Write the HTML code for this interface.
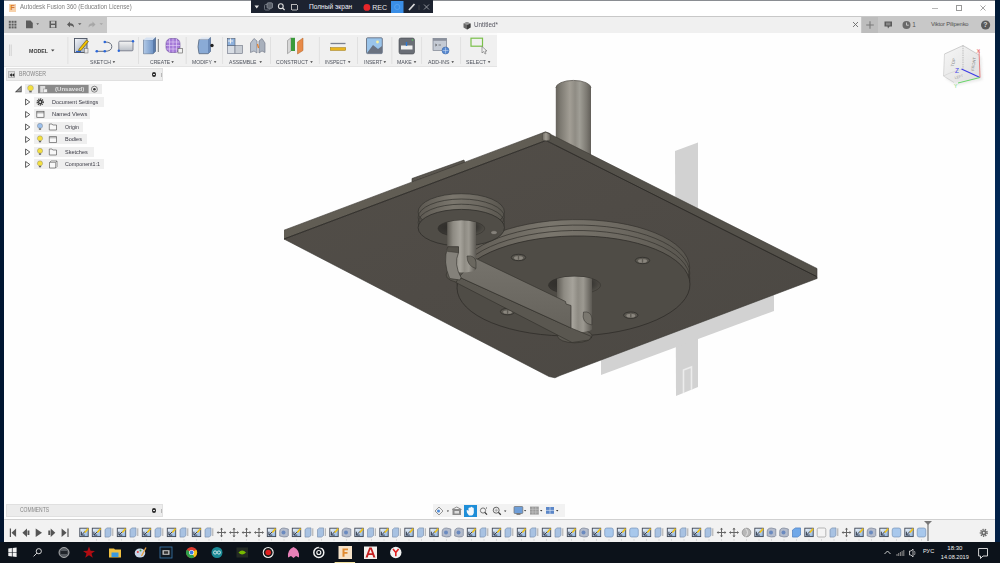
<!DOCTYPE html>
<html><head><meta charset="utf-8">
<style>
*{margin:0;padding:0;box-sizing:border-box}
html,body{width:1000px;height:563px;overflow:hidden;background:#fefefe;font-family:"Liberation Sans",sans-serif}
.a{position:absolute}
.t{position:absolute;white-space:nowrap;line-height:1}
</style></head><body>
<div class="a" style="left:0;top:0;width:1000px;height:563px;background:#fefefe"></div>
<svg class="a" style="left:0;top:0" width="1000" height="563" viewBox="0 0 1000 563">
<defs>
<linearGradient id="cyl" x1="0" x2="1" y1="0" y2="0">
<stop offset="0" stop-color="#66635c"/><stop offset="0.12" stop-color="#7b7870"/><stop offset="0.4" stop-color="#a29e95"/><stop offset="0.55" stop-color="#8f8c84"/><stop offset="0.68" stop-color="#a09e96"/><stop offset="0.88" stop-color="#7c7972"/><stop offset="1" stop-color="#615e58"/>
</linearGradient>
<linearGradient id="shaft" x1="0" x2="1" y1="0" y2="0">
<stop offset="0" stop-color="#5f5c55"/><stop offset="0.2" stop-color="#8d8a82"/><stop offset="0.45" stop-color="#a6a39b"/><stop offset="0.6" stop-color="#8e8b83"/><stop offset="0.75" stop-color="#9c9991"/><stop offset="1" stop-color="#5c5953"/>
</linearGradient>
<linearGradient id="bot" x1="0" x2="1" y1="0" y2="1">
<stop offset="0" stop-color="#524e48"/><stop offset="0.45" stop-color="#4f4b46"/><stop offset="1" stop-color="#4b4843"/>
</linearGradient>
<linearGradient id="band" x1="0" x2="1" y1="0" y2="0">
<stop offset="0" stop-color="#5c5851"/><stop offset="0.4" stop-color="#7a766d"/><stop offset="0.7" stop-color="#6d6961"/><stop offset="1" stop-color="#58554e"/>
</linearGradient>
<linearGradient id="armg" x1="0" x2="0" y1="0" y2="1">
<stop offset="0" stop-color="#76736c"/><stop offset="1" stop-color="#66635c"/>
</linearGradient>
<radialGradient id="holeg" cx="0.35" cy="0.4" r="0.7">
<stop offset="0" stop-color="#2c2a27"/><stop offset="0.7" stop-color="#3a3834"/><stop offset="1" stop-color="#55524b"/>
</radialGradient>
<filter id="blur"><feGaussianBlur stdDeviation="0.7"/></filter>
</defs>
<!-- shadow -->
<g fill="#d2d2d2" filter="url(#blur)">
<polygon points="675,151 698,142.5 698,387 676,396"/>
<polygon points="601,350 774,286 774,311 601,375"/>
</g>
<path d="M683.5,393 L683.5,370 L691.5,367 L691.5,390" fill="none" stroke="#ececec" stroke-width="1.6" filter="url(#blur)"/>
<!-- top cylinder -->
<path d="M555.8,88 A17.6,7.6 0 0 1 591,88 L591,160 L555.8,160 Z" fill="url(#cyl)"/>
<path d="M555.8,88 A17.6,7.6 0 0 1 591,88" fill="none" stroke="#5a5751" stroke-width="0.8"/>
<!-- tab -->
<polygon points="412,178.5 464,160 465,163.5 412,182" fill="#5a564f" stroke="#34322e" stroke-width="0.6"/>
<!-- plate side faces -->
<polygon points="284,230.2 545.5,131.8 546,140.5 284,239" fill="#615d54"/>
<polygon points="545.5,131.8 817,268.5 817,278.5 546,140.5" fill="#54514a"/>
<!-- plate bottom face -->
<polygon points="284,239 546,140.5 816.5,276.5 817,278.5 560,375.5 555,377.8 549,376.5" fill="url(#bot)" stroke="#36342f" stroke-width="0.6"/>
<polyline points="284,239 546,140.5 816.5,276.5" fill="none" stroke="#2f2d29" stroke-width="0.9"/>
<defs><linearGradient id="notch" x1="0" x2="1" y1="0" y2="0"><stop offset="0" stop-color="#6e6a62"/><stop offset="0.45" stop-color="#a09c93"/><stop offset="1" stop-color="#6a665e"/></linearGradient></defs><path d="M542.4,133.5 Q546.3,131.2 550.2,133.5 L550.2,140 Q546.3,141.5 542.4,140 Z" fill="url(#notch)" stroke="#3a3833" stroke-width="0.4"/>
<polyline points="284,230.2 545.5,131.8 817,268.5 817,278.5" fill="none" stroke="#3a3833" stroke-width="0.6"/>

<!-- big disc -->
<g transform="rotate(-1 573.5 286)">
<ellipse cx="573.5" cy="269.6" rx="116.5" ry="50" fill="url(#band)" stroke="#34322e" stroke-width="0.7"/>
<ellipse cx="573.5" cy="275.1" rx="116.5" ry="50" fill="none" stroke="#393732" stroke-width="0.8"/>
<ellipse cx="573.5" cy="280.5" rx="116.5" ry="50" fill="none" stroke="#393732" stroke-width="0.8"/>
<ellipse cx="573.5" cy="286" rx="116.5" ry="50" fill="#4f4c46" stroke="#2f2d29" stroke-width="0.8"/>
</g>
<!-- disc holes -->
<g fill="#5a5750" stroke="#2a2825" stroke-width="0.7">
<ellipse cx="518.5" cy="257.5" rx="7.2" ry="3.2"/>
<ellipse cx="642.5" cy="260.5" rx="7.2" ry="3.2"/>
<ellipse cx="507.6" cy="311.6" rx="7.2" ry="3.2"/>
<ellipse cx="630.8" cy="315.2" rx="7.2" ry="3.2"/>
</g>
<g fill="#8a867e">
<ellipse cx="518.5" cy="258" rx="4.5" ry="1.9"/>
<ellipse cx="642.5" cy="261" rx="4.5" ry="1.9"/>
<ellipse cx="507.6" cy="312.1" rx="4.5" ry="1.9"/>
<ellipse cx="630.8" cy="315.7" rx="4.5" ry="1.9"/>
</g>
<g fill="#5e5b54">
<rect x="517.8" y="256" width="1.4" height="3.8"/><rect x="641.8" y="259" width="1.4" height="3.8"/><rect x="506.9" y="310.1" width="1.4" height="3.8"/><rect x="630.1" y="313.7" width="1.4" height="3.8"/>
</g>
<!-- small pulley -->
<ellipse cx="461.3" cy="212" rx="43.2" ry="18.3" fill="url(#band)" stroke="#34322e" stroke-width="0.7"/>
<ellipse cx="461.3" cy="217.3" rx="43.2" ry="18.3" fill="none" stroke="#393732" stroke-width="0.8"/>
<ellipse cx="461.3" cy="222.5" rx="43.2" ry="18.3" fill="none" stroke="#393732" stroke-width="0.8"/>
<ellipse cx="461.3" cy="227.7" rx="43.2" ry="18.3" fill="#504d47" stroke="#2f2d29" stroke-width="0.8"/>
<ellipse cx="461.3" cy="228.5" rx="23.3" ry="8.2" fill="url(#holeg)" stroke="#2f2d29" stroke-width="0.5"/>
<ellipse cx="494" cy="232.6" rx="3.2" ry="2" fill="#85817a" stroke="#2f2d29" stroke-width="0.4"/>

<!-- center hole -->
<ellipse cx="574.5" cy="285.2" rx="26" ry="9" fill="url(#holeg)" stroke="#2f2d29" stroke-width="0.5"/>
<!-- shaft 1 -->
<ellipse cx="461.6" cy="275" rx="15.5" ry="7.5" fill="#5a5750" stroke="#2f2d29" stroke-width="0.6"/>
<!-- shaft2 end cap -->
<ellipse cx="574.8" cy="336" rx="17.3" ry="6.8" fill="#5c5952" stroke="#2f2d29" stroke-width="0.6"/>
<path d="M558,334 L592,337.5" stroke="#2f2d29" stroke-width="0.5"/>
<!-- shaft 2 -->
<path d="M557,278.8 A26,9 0 0 1 592,278.8 L592,329 A17.5,3.5 0 0 1 557,329 Z" fill="url(#shaft)"/>
<path d="M583.5,312 Q591,311 591.8,318 L591.8,325 Q581,323 583.5,312 Z" fill="#7a776f" stroke="#2f2d29" stroke-width="0.5"/>
<!-- arm narrow band -->
<polygon points="459,277 571,328 591.5,336.5 589,340 572,342.5 456,282.5" fill="#5a5750" stroke="#2f2d29" stroke-width="0.6"/>
<!-- arm broad face -->
<polygon points="476,258.6 565.5,301.5 566,304 571,305.5 571,328 459,277" fill="url(#armg)" stroke="#2f2d29" stroke-width="0.6"/>
<!-- shaft 1 body -->
<path d="M447.2,222.2 A23.3,8.2 0 0 1 476,222.2 L476,269 A14.4,3.5 0 0 1 447.2,269 Z" fill="url(#shaft)"/>
<path d="M467,256 Q475,255 476,262 L476,268.5 Q467,266 467,256 Z" fill="#6a675f" stroke="#2f2d29" stroke-width="0.5"/>
<!-- hook on shaft1 -->
<path d="M447.7,246.8 L458.5,246.8 L458.5,252.7 Q453.5,264 461,277.5 L460,280 L449.7,278.5 Q442.5,262 447.7,246.8 Z" fill="#84817a" stroke="#2f2d29" stroke-width="0.6"/>
<path d="M447.7,246.8 L458.5,246.8 L458.5,252.7 L447.5,251.5 Z" fill="#55524b" stroke="#2f2d29" stroke-width="0.4"/>

</svg>
<!-- title bar -->
<div class="a" style="left:0;top:0;width:1000px;height:16px;background:#ffffff"></div>
<div class="a" style="left:0;top:0;width:1000px;height:1px;background:#8a8d92"></div>
<div class="a" style="left:9px;top:4px;width:6.5px;height:7.5px;background:#f7d2ac"></div>
<div class="t" style="left:10.3px;top:4.4px;font-size:7.5px;font-weight:bold;color:#d97a2a">F</div>
<div class="t" style="left:19.5px;top:4.2px;font-size:6.6px;color:#7c7c7c;transform:scaleX(0.915);transform-origin:0 0">Autodesk Fusion 360 (Education License)</div>
<!-- window controls -->
<div class="a" style="left:932px;top:8px;width:6px;height:1px;background:#b8b8b8"></div>
<div class="a" style="left:956px;top:5px;width:6px;height:6px;border:1px solid #9a9a9a"></div>
<svg class="a" style="left:980px;top:5px" width="6" height="6"><path d="M0.5,0.5 L5.5,5.5 M5.5,0.5 L0.5,5.5" stroke="#9a9a9a" stroke-width="0.9"/></svg>

<!-- record toolbar -->
<div class="a" style="left:250.5px;top:0;width:182px;height:13px;background:#1d2330"></div>
<svg class="a" style="left:250px;top:0" width="182" height="13">
<path d="M4.5,5.5 L9,5.5 L6.75,8.5 Z" fill="#e8e8e8"/>
<rect x="14.5" y="4.5" width="5.5" height="5.5" rx="1.2" fill="none" stroke="#6a707a" stroke-width="1"/><rect x="17" y="2.8" width="5.5" height="5.5" rx="1.2" fill="#5a606a" stroke="#8a909a" stroke-width="0.8"/>
<circle cx="30.8" cy="6.2" r="2.4" fill="none" stroke="#e0e0e0" stroke-width="1.1"/><path d="M32.5,8 L34.6,10" stroke="#e0e0e0" stroke-width="1.2"/>
<path d="M41.5,4 L41.5,10 M42,4.5 L47,4.5 M47.5,5 L47.5,10 M42,10 L47,10" stroke="#c8c8c8" stroke-width="0.9"/>
<circle cx="116.9" cy="7.4" r="3.4" fill="#e8262a"/>
<rect x="141" y="1" width="12.5" height="12" fill="#3a8ee6"/>
<circle cx="147.2" cy="7" r="2.6" fill="none" stroke="#5aa6f0" stroke-width="0.8"/>
<path d="M159,10 L164.5,4" stroke="#d8d8d8" stroke-width="1.8"/>
<path d="M169,5 L169,10" stroke="#555" stroke-width="0.6"/>
<path d="M174,4.5 L179,9.5 M179,4.5 L174,9.5" stroke="#9a9ea6" stroke-width="0.9"/>
</svg>
<div class="t" style="left:309px;top:4.3px;font-size:6.6px;color:#eef0f8">Полный экран</div>
<div class="t" style="left:372.3px;top:4px;font-size:7px;color:#eaeaea">REC</div>

<!-- tab bar -->
<div class="a" style="left:4px;top:16px;width:991px;height:17px;background:#c8c8c8"></div>
<div class="a" style="left:107px;top:17px;width:754px;height:16px;background:#f0f0f0"></div>
<svg class="a" style="left:4px;top:16px" width="103" height="17">
<g fill="#5c5c5c">
<rect x="4.8" y="4.8" width="2" height="2"/><rect x="7.6" y="4.8" width="2" height="2"/><rect x="10.4" y="4.8" width="2" height="2"/>
<rect x="4.8" y="7.6" width="2" height="2"/><rect x="7.6" y="7.6" width="2" height="2"/><rect x="10.4" y="7.6" width="2" height="2"/>
<rect x="4.8" y="10.4" width="2" height="2"/><rect x="7.6" y="10.4" width="2" height="2"/><rect x="10.4" y="10.4" width="2" height="2"/>
</g>
<path d="M22,4.6 L26.5,4.6 L28.8,7 L28.8,12.3 L22,12.3 Z" fill="#5c5c5c"/>
<path d="M32.3,7.3 L35,7.3 L33.65,9 Z" fill="#5c5c5c"/>
<path d="M45.5,4.8 L52.5,4.8 L52.5,12 L45.5,12 Z" fill="#5c5c5c"/><rect x="47" y="5.3" width="4" height="2.3" fill="#c8c8c8"/><rect x="47" y="9" width="4" height="2.5" fill="#c8c8c8"/>
<path d="M63,8.5 L66,5.5 L66,7.3 Q70,7.3 70,11.5 Q68.5,9.3 66,9.5 L66,11.3 Z" fill="#5c5c5c"/>
<path d="M74,7.3 L77.5,7.3 L75.75,9 Z" fill="#5c5c5c"/>
<path d="M91.5,8.5 L88.5,5.5 L88.5,7.3 Q84.5,7.3 84.5,11.5 Q86,9.3 88.5,9.5 L88.5,11.3 Z" fill="#a6a6a6"/>
<path d="M95.5,7.3 L99,7.3 L97.25,9 Z" fill="#a6a6a6"/>
</svg>
<svg class="a" style="left:462px;top:20.8px" width="10" height="10">
<path d="M1.5,2.5 L5,1 L8.5,2.5 L8.5,6.5 L5,8.5 L1.5,6.5 Z" fill="#6a6a6a"/><path d="M5,4 L8.5,2.5 L8.5,6.5 L5,8.5 Z" fill="#3e3e3e"/><path d="M1.5,2.5 L5,1 L8.5,2.5 L5,4 Z" fill="#9a9a9a"/>
</svg>
<div class="t" style="left:474px;top:21.8px;font-size:6.8px;color:#55555f;transform:scaleX(0.93);transform-origin:0 0">Untitled*</div>
<svg class="a" style="left:852px;top:21px" width="7" height="7"><path d="M1,1 L6,6 M6,1 L1,6" stroke="#6a6a6a" stroke-width="0.9"/></svg>
<div class="a" style="left:862px;top:17px;width:16px;height:16px;background:#bdbdbd"></div>
<svg class="a" style="left:862px;top:17px" width="133" height="16">
<path d="M8,4.2 L8,11.8 M4.2,8 L11.8,8" stroke="#7a7a7a" stroke-width="1.1"/>
<path d="M22.5,4.5 L30,4.5 L30,9.5 L27.5,9.5 L26,11.5 L25.5,9.5 L22.5,9.5 Z" fill="#5a5a5a"/><path d="M24,6.2 L28.5,6.2 M24,7.8 L28.5,7.8" stroke="#c8c8c8" stroke-width="0.6"/>
<circle cx="44.5" cy="8" r="4" fill="#6a6a6a"/><path d="M44.5,5.5 L44.5,8.2 L46.8,8.2" stroke="#d0d0d0" stroke-width="0.9" fill="none"/>
<circle cx="123.6" cy="8" r="4.6" fill="#5a5a5a"/>
</svg>
<div class="t" style="left:912.3px;top:22px;font-size:6.4px;color:#555">1</div>
<div class="t" style="left:931px;top:21.6px;font-size:5.8px;color:#505050;letter-spacing:-0.15px">Viktor Pilipenko</div>
<div class="t" style="left:983.3px;top:21.2px;font-size:7px;font-weight:bold;color:#d8d8d8">?</div>
<!-- ribbon -->
<div class="a" style="left:4px;top:33px;width:493px;height:1.5px;background:#fbfbfb"></div>
<div class="a" style="left:4px;top:34.5px;width:493px;height:31.5px;background:#f0f0f0"></div>
<div class="a" style="left:4px;top:66px;width:493px;height:1px;background:#e4e4e4"></div>
<svg class="a" style="left:0;top:33px" width="500" height="34">
<path d="M9.5,11.5 L9.5,23 M11.2,11.5 L11.2,23" stroke="#c4c4c4" stroke-width="0.7"/>
<g stroke="#dcdcdc" stroke-width="0.8">
<path d="M67.9,4 L67.9,31"/><path d="M138.5,4 L138.5,31"/><path d="M186.2,4 L186.2,31"/><path d="M222.6,4 L222.6,31"/><path d="M270.5,4 L270.5,31"/><path d="M319.4,4 L319.4,31"/><path d="M357.5,4 L357.5,31"/><path d="M391.8,4 L391.8,31"/><path d="M421.6,4 L421.6,31"/><path d="M460.6,4 L460.6,31"/>
</g>
<!-- sketch icon -->
<defs>
<linearGradient id="gbox" x1="0" x2="1" y1="0" y2="1"><stop offset="0" stop-color="#f4f6fa"/><stop offset="1" stop-color="#9aa6b8"/></linearGradient>
<linearGradient id="gblue" x1="0" x2="1" y1="0" y2="0"><stop offset="0" stop-color="#c9dcf2"/><stop offset="1" stop-color="#6d93c6"/></linearGradient>
<linearGradient id="gsurf" x1="0" x2="0" y1="0" y2="1"><stop offset="0" stop-color="#f5f5f5"/><stop offset="1" stop-color="#b9bec6"/></linearGradient>
</defs>
<rect x="74.5" y="5.5" width="12.5" height="14" fill="url(#gbox)" stroke="#4a5262" stroke-width="0.9"/>
<path d="M79,16 L86.5,7 L88.5,8.5 L81,17.5 L78.5,18 Z" fill="#f2c200" stroke="#5a4a10" stroke-width="0.6"/>
<rect x="84.5" y="15.5" width="3.5" height="4.5" fill="#e8e8e8" stroke="#6a6a6a" stroke-width="0.5"/>
<path d="M76,18.5 L81,18.5" stroke="#2a66d8" stroke-width="1.2"/>
<!-- line/arc icon -->
<path d="M96.8,18.3 L104.8,18.3 M104.8,9 Q111.8,9 111.8,13.6 Q111.8,18.3 104.8,18.3" fill="none" stroke="#5a6270" stroke-width="0.9"/>
<g fill="#2a66d8"><circle cx="96.8" cy="18.3" r="1.3"/><circle cx="104.8" cy="18.3" r="1.3"/><circle cx="104.8" cy="9" r="1.3"/></g>
<!-- rect icon -->
<rect x="118.8" y="8.2" width="14.2" height="9.6" rx="1" fill="url(#gsurf)" stroke="#6a7080" stroke-width="0.8"/>
<g fill="#2a66d8"><circle cx="118.8" cy="17.8" r="1.2"/><circle cx="133" cy="8.2" r="1.2"/></g>
<!-- extrude box -->
<path d="M143.5,7 L153,7 L155.5,4.6 L155.5,18.3 L153,20.7 L143.5,20.7 Z" fill="#7e9fcc" stroke="#4c5a70" stroke-width="0.7"/>
<path d="M143.5,7 L146,4.6 L155.5,4.6 L153,7 Z" fill="#d6e2f2"/>
<path d="M153,7 L155.5,4.6 L155.5,18.3 L153,20.7 Z" fill="#5a7aa8"/>
<rect x="143.5" y="7" width="9.5" height="13.7" fill="url(#gblue)" opacity="0.7"/>
<path d="M158.3,6 L158.3,19" stroke="#6a6a6a" stroke-width="0.9"/>
<!-- purple sphere -->
<rect x="166" y="5.5" width="14" height="14" rx="5" fill="#a57ad8" stroke="#6a4a9a" stroke-width="0.6"/>
<g stroke="#e6d6f8" stroke-width="0.6"><path d="M169.5,5.8 L169.5,19.2 M173,5.5 L173,19.5 M176.5,5.8 L176.5,19.2 M166.3,9 L179.7,9 M166,12.5 L180,12.5 M166.3,16 L179.7,16"/></g>
<rect x="178" y="15.5" width="4.5" height="4.5" fill="#f0f0f0" stroke="#555" stroke-width="0.6"/>
<!-- modify -->
<path d="M199,6.5 L208,6.5 L210.5,4.5 L210.5,18.5 L208,20.7 L199,20.7 Q197,14 199,6.5 Z" fill="#8aabd6" stroke="#4c5a70" stroke-width="0.7"/>
<path d="M199,6.5 L201.5,4.5 L210.5,4.5 L208,6.5 Z" fill="#dce6f4"/>
<path d="M208,6.5 L210.5,4.5 L210.5,18.5 L208,20.7 Z" fill="#6a8ab8"/>
<circle cx="212" cy="12.5" r="1.7" fill="#222"/>
<!-- assemble -->
<rect x="227.5" y="12.5" width="7.5" height="8" fill="#d8dde4" stroke="#6a7080" stroke-width="0.6"/>
<rect x="235" y="12.5" width="7.5" height="8" fill="#c8cdd4" stroke="#6a7080" stroke-width="0.6"/>
<rect x="227.5" y="5.5" width="7.5" height="7" fill="#8fb2de" stroke="#4c5a70" stroke-width="0.6"/>
<path d="M228,8 L233,8 M230.5,5.5 L230.5,10.5" stroke="#f0f0f0" stroke-width="1"/>
<!-- joint -->
<path d="M250.5,10 L254,5.5 L257,8 L257,20 L254,18 L250.5,19.5 Z" fill="#b8c0cc" stroke="#6a7080" stroke-width="0.6"/>
<path d="M259,8 L262,5.5 L265,10 L265,19.5 L262,18 L259,20 Z" fill="#a8b0bc" stroke="#6a7080" stroke-width="0.6"/>
<path d="M257.5,11 L258.5,15" stroke="#e67a20" stroke-width="1.2"/>
<!-- construct -->
<path d="M287.5,7.5 L291,4.8 L291,18 L287.5,20.7 Z" fill="#d8d8d8" stroke="#777" stroke-width="0.5"/>
<path d="M291,4.8 L295,4.8 L295,18 L291,18 Z" fill="#3a9a3a"/>
<path d="M297.5,9 L303,5 L303,17.5 L297.5,21 Z" fill="#e88a48" stroke="#b06020" stroke-width="0.5"/>
<!-- inspect -->
<path d="M330.5,10.5 L345.5,10.5" stroke="#7a8090" stroke-width="1.3"/>
<rect x="330.3" y="14.6" width="15.4" height="2.8" fill="#e8b420" stroke="#9a7410" stroke-width="0.5"/>
<!-- insert -->
<rect x="366.5" y="4.8" width="15.8" height="15.8" rx="1" fill="#9ac4ea" stroke="#5a6272" stroke-width="0.8"/>
<path d="M367,20 L373,12 L378,16 L382,13 L382,20 Z" fill="#6a7280"/>
<circle cx="377.5" cy="9" r="1.4" fill="#f8f0a0"/>
<!-- make -->
<rect x="399" y="5" width="15.5" height="16" rx="2" fill="#6a6e76" stroke="#44484e" stroke-width="0.6"/>
<rect x="401" y="12.5" width="11.5" height="4" fill="#f0f0f0"/>
<path d="M406.5,9 L406.5,13" stroke="#2a78d8" stroke-width="1.4"/>
<circle cx="412.5" cy="7" r="0.8" fill="#5ad05a"/>
<!-- add-ins -->
<rect x="433" y="5.3" width="13.5" height="12" fill="#c4cad4" stroke="#6a7080" stroke-width="0.6"/>
<rect x="433" y="5.3" width="13.5" height="2.5" fill="#8a909c"/>
<path d="M435,11 L437,12 L435,13 M438.5,12 L441,12" stroke="#333" stroke-width="0.5" fill="none"/>
<circle cx="445.5" cy="17.5" r="3.5" fill="#5a8ad0" stroke="#2a5aa0" stroke-width="0.5"/>
<path d="M445.5,14.5 L445.5,20.5 M442.5,17.5 L448.5,17.5" stroke="#d8e6f8" stroke-width="0.5"/>
<!-- select -->
<rect x="471" y="5.2" width="11.5" height="8" fill="none" stroke="#7ac04a" stroke-width="1.2"/>
<path d="M482,13.5 L482,20 L483.5,18.5 L485,21 L486,20.5 L485,18 L487,18 Z" fill="#f0f0f0" stroke="#555" stroke-width="0.5"/>
</svg>
<div class="t" style="left:29.2px;top:48px;font-size:6.2px;font-weight:bold;color:#3a3a3a;transform:scaleX(0.85);transform-origin:0 0">MODEL</div>
<svg class="a" style="left:51px;top:49px" width="4" height="3"><path d="M0,0.5 L3.5,0.5 L1.75,2.5 Z" fill="#444"/></svg>
<div class="t" style="left:0;top:59.5px;width:500px;height:8px;font-size:5.6px;color:#4c505a">
<span class="t" style="left:90.1px;transform:scaleX(0.920);transform-origin:0 0">SKETCH</span>
<span class="t" style="left:149.8px;transform:scaleX(0.906);transform-origin:0 0">CREATE</span>
<span class="t" style="left:192px;transform:scaleX(0.909);transform-origin:0 0">MODIFY</span>
<span class="t" style="left:229.4px;transform:scaleX(0.911);transform-origin:0 0">ASSEMBLE</span>
<span class="t" style="left:275.9px;transform:scaleX(0.913);transform-origin:0 0">CONSTRUCT</span>
<span class="t" style="left:324.5px;transform:scaleX(0.857);transform-origin:0 0">INSPECT</span>
<span class="t" style="left:363.5px;transform:scaleX(0.891);transform-origin:0 0">INSERT</span>
<span class="t" style="left:396.8px;transform:scaleX(0.933);transform-origin:0 0">MAKE</span>
<span class="t" style="left:427.7px;transform:scaleX(0.938);transform-origin:0 0">ADD-INS</span>
<span class="t" style="left:465.7px;transform:scaleX(0.918);transform-origin:0 0">SELECT</span>
</div>
<svg class="a" style="left:0;top:61.2px" width="500" height="3">
<g fill="#3a3a3a"><path d="M112.6,0.3 L115.2,0.3 L113.9,2 Z"/><path d="M171.3,0.3 L173.9,0.3 L172.6,2 Z"/><path d="M213.8,0.3 L216.4,0.3 L215.1,2 Z"/><path d="M259.4,0.3 L262.0,0.3 L260.7,2 Z"/><path d="M310.2,0.3 L312.8,0.3 L311.5,2 Z"/><path d="M347.9,0.3 L350.5,0.3 L349.2,2 Z"/><path d="M383.5,0.3 L386.1,0.3 L384.8,2 Z"/><path d="M413.7,0.3 L416.3,0.3 L415.0,2 Z"/><path d="M451.4,0.3 L454.0,0.3 L452.7,2 Z"/><path d="M487.8,0.3 L490.4,0.3 L489.1,2 Z"/></g>
</svg>
<!-- browser panel -->
<div class="a" style="left:6px;top:68.4px;width:157px;height:12.6px;background:#ececec;border:1px solid #e0e0e0"></div>
<div class="a" style="left:8.3px;top:71.2px;width:7px;height:7px;background:#dcdcdc;border:0.5px solid #b8b8b8"></div>
<svg class="a" style="left:8px;top:71px" width="8" height="8"><path d="M1.5,4 L3.9,2.2 L3.9,5.8 Z M3.9,4 L6.3,2.2 L6.3,5.8 Z" fill="#222"/></svg>
<div class="t" style="left:19.2px;top:71.1px;font-size:6.3px;color:#858585;transform:scaleX(0.829);transform-origin:0 0">BROWSER</div>
<div class="a" style="left:151.6px;top:72.3px;width:4.4px;height:4.4px;border-radius:50%;background:#2e2e2e"></div>
<div class="a" style="left:152.6px;top:74.2px;width:2.4px;height:0.7px;background:#ddd"></div>
<div class="a" style="left:160.5px;top:72.5px;width:1px;height:4px;background:#b8b8b8"></div>

<!-- tree -->
<div class="a" style="left:24.8px;top:84.3px;width:77px;height:10px;background:#ececec"></div>
<svg class="a" style="left:14px;top:84px" width="90" height="12">
<path d="M0.8,8.2 L7.6,1.4 L7.6,8.2 Z" fill="#444"/><path d="M2.6,7.5 L6.9,3.2 L6.9,7.5 Z" fill="#9a9a9a"/>
<path d="M16.5,1.2 Q19.4,1.2 19.4,4.1 Q19.4,5.6 17.9,6.7 L15.1,6.7 Q13.6,5.6 13.6,4.1 Q13.6,1.2 16.5,1.2 Z" fill="#f4e040" stroke="#777" stroke-width="0.35"/><rect x="15.3" y="6.9" width="2.4" height="1.5" fill="#666"/>
<rect x="24" y="0.9" width="50.6" height="8.3" fill="#8a8a8a"/>
<rect x="26.2" y="2" width="5" height="6.5" fill="#ddd"/><rect x="29.5" y="5" width="3.8" height="3.5" fill="#f0f0f0" stroke="#777" stroke-width="0.4"/>
<circle cx="80.4" cy="5.2" r="3" fill="none" stroke="#555" stroke-width="0.7"/><circle cx="80.4" cy="5.2" r="1.3" fill="#333"/>
</svg>
<div class="t" style="left:55px;top:86.4px;font-size:6.2px;font-weight:bold;color:#e0e0e0;transform:scaleX(0.98);transform-origin:0 0">(Unsaved)</div>

<div class="a" style="left:34px;top:96.9px;width:70px;height:10px;background:#efefef"></div>
<div class="a" style="left:34px;top:109.4px;width:56px;height:10px;background:#efefef"></div>
<div class="a" style="left:34px;top:121.9px;width:49px;height:10px;background:#efefef"></div>
<div class="a" style="left:34px;top:134.4px;width:53px;height:10px;background:#efefef"></div>
<div class="a" style="left:34px;top:146.9px;width:60px;height:10px;background:#efefef"></div>
<div class="a" style="left:34px;top:159.4px;width:70px;height:10px;background:#efefef"></div>
<svg class="a" style="left:0;top:96px" width="60" height="76">
<g fill="none" stroke="#4a4a4a" stroke-width="0.9">
<path d="M25.6,3 L29.8,6 L25.6,9 Z"/><path d="M25.6,15.5 L29.8,18.5 L25.6,21.5 Z"/><path d="M25.6,28 L29.8,31 L25.6,34 Z"/><path d="M25.6,40.5 L29.8,43.5 L25.6,46.5 Z"/><path d="M25.6,53 L29.8,56 L25.6,59 Z"/><path d="M25.6,65.5 L29.8,68.5 L25.6,71.5 Z"/>
</g>
<circle cx="40.2" cy="6" r="2.9" fill="none" stroke="#3a3a3a" stroke-width="1.6" stroke-dasharray="1.1 0.8"/><circle cx="40.2" cy="6" r="2.3" fill="#3a3a3a"/><circle cx="40.2" cy="6" r="0.9" fill="#efefef"/>
<rect x="36.8" y="15.3" width="7.2" height="6" fill="#f8f8f8" stroke="#555" stroke-width="0.7"/><path d="M36.8,16.8 L44,16.8" stroke="#555" stroke-width="0.6"/>
<g stroke="#666" stroke-width="0.35">
<path d="M40,27.3 Q42.6,27.3 42.6,29.9 Q42.6,31.2 41.3,32.2 L38.7,32.2 Q37.4,31.2 37.4,29.9 Q37.4,27.3 40,27.3 Z" fill="#9cc0ec"/>
<path d="M40,39.8 Q42.6,39.8 42.6,42.4 Q42.6,43.7 41.3,44.7 L38.7,44.7 Q37.4,43.7 37.4,42.4 Q37.4,39.8 40,39.8 Z" fill="#f4e040"/>
<path d="M40,52.3 Q42.6,52.3 42.6,54.9 Q42.6,56.2 41.3,57.2 L38.7,57.2 Q37.4,56.2 37.4,54.9 Q37.4,52.3 40,52.3 Z" fill="#f4e040"/>
<path d="M40,64.8 Q42.6,64.8 42.6,67.4 Q42.6,68.7 41.3,69.7 L38.7,69.7 Q37.4,68.7 37.4,67.4 Q37.4,64.8 40,64.8 Z" fill="#f4e040"/>
</g>
<g fill="#666"><rect x="38.9" y="32.4" width="2.2" height="1.4"/><rect x="38.9" y="44.9" width="2.2" height="1.4"/><rect x="38.9" y="57.4" width="2.2" height="1.4"/><rect x="38.9" y="69.9" width="2.2" height="1.4"/></g>
<g fill="#f8f8f8" stroke="#555" stroke-width="0.65">
<path d="M49.3,28 L52,28 L52.8,29 L56.5,29 L56.5,34 L49.3,34 Z"/><path d="M49.3,40.5 L56.5,40.5 L56.5,46.5 L49.3,46.5 Z"/><path d="M49.3,53 L52,53 L52.8,54 L56.5,54 L56.5,59 L49.3,59 Z"/>
<path d="M49.5,66.5 L51,65 L57,65 L57,70.5 L55.5,72 L49.5,72 Z"/>
</g>
<path d="M49.3,41.8 L56.5,41.8 M49.5,66.5 L55.5,66.5 L57,65 M55.5,66.5 L55.5,72" fill="none" stroke="#555" stroke-width="0.5"/>
</svg>
<div class="t" style="left:51.7px;top:98.7px;font-size:6.2px;color:#383842;transform:scaleX(0.884);transform-origin:0 0">Document Settings</div>
<div class="t" style="left:51.7px;top:111.2px;font-size:6.2px;color:#383842;transform:scaleX(0.926);transform-origin:0 0">Named Views</div>
<div class="t" style="left:65px;top:123.8px;font-size:6.2px;color:#383842;transform:scaleX(0.834);transform-origin:0 0">Origin</div>
<div class="t" style="left:65px;top:136.3px;font-size:6.2px;color:#383842;transform:scaleX(0.897);transform-origin:0 0">Bodies</div>
<div class="t" style="left:65px;top:148.8px;font-size:6.2px;color:#383842;transform:scaleX(0.894);transform-origin:0 0">Sketches</div>
<div class="t" style="left:65px;top:161.4px;font-size:6.2px;color:#383842;transform:scaleX(0.861);transform-origin:0 0">Component1:1</div>

<!-- comments -->
<div class="a" style="left:6px;top:504.2px;width:157px;height:12.6px;background:#ececec;border:1px solid #e0e0e0"></div>
<div class="t" style="left:19.6px;top:507.1px;font-size:6.3px;color:#858585;transform:scaleX(0.792);transform-origin:0 0">COMMENTS</div>
<div class="a" style="left:151.6px;top:508.3px;width:4.4px;height:4.4px;border-radius:50%;background:#2e2e2e"></div>
<div class="a" style="left:152.6px;top:510.2px;width:2.4px;height:0.7px;background:#ddd"></div>
<div class="a" style="left:160.5px;top:508.5px;width:1px;height:4px;background:#b8b8b8"></div>
<!-- view cube -->
<svg class="a" style="left:920px;top:40px" width="75" height="52">
<defs><linearGradient id="vc" x1="0" x2="1" y1="0" y2="1"><stop offset="0" stop-color="#f6f6f6"/><stop offset="1" stop-color="#dedede"/></linearGradient>
<filter id="vcs"><feGaussianBlur stdDeviation="1.2"/></filter></defs>
<path d="M25,15 L43.5,6 L60,15.5 L61,38.5 L35,44 L24.5,37.5 Z" fill="#c8c8c8" opacity="0.35" filter="url(#vcs)" transform="translate(1.5,1.5)"/>
<path d="M24.5,14 L43,5.5 L59,15 L60,37.5 L34,42.5 L23.5,36 Z" fill="url(#vc)"/>
<path d="M24.5,14 L43,5.5 L59,15" fill="none" stroke="#b0b0b0" stroke-width="0.6"/>
<path d="M24.5,14 L23.5,36 L34,42.5" fill="none" stroke="#c4c4c4" stroke-width="0.6"/>
<path d="M43,5.5 L43,29" fill="none" stroke="#9a9a9a" stroke-width="0.6" stroke-dasharray="1.4 0.9"/>
<path d="M23.5,36 L30,33 L43,29" fill="none" stroke="#c8c8c8" stroke-width="0.5"/>
<path d="M41.5,29 L60,37.5" stroke="#3c3ce6" stroke-width="1.2"/>
<path d="M59,10 L60,37.5" stroke="#e87070" stroke-width="0.9"/>
<path d="M38,43 L60,37.5" stroke="#66d466" stroke-width="1"/>
<text x="56.5" y="12.5" font-size="5.5" fill="#e86060" font-family="Liberation Sans">X</text>
<text x="35" y="33" font-size="6.5" fill="#4848e8" font-family="Liberation Sans">Z</text>
<text x="34" y="47.5" font-size="5" fill="#70d870" font-family="Liberation Sans">Y</text>
<text x="0" y="0" font-size="4.2" fill="#8a8a8a" font-family="Liberation Sans" transform="translate(33.5,27) rotate(-75)">TOP</text>
<text x="0" y="0" font-size="4" fill="#8a8a8a" font-family="Liberation Sans" transform="translate(54,31) rotate(-82)">FRONT</text>
<text x="0" y="0" font-size="3.5" fill="#9a9a9a" font-family="Liberation Sans" transform="translate(35,39) rotate(-15)">LEFT</text>
</svg>

<!-- nav bar -->
<div class="a" style="left:433.2px;top:504.4px;width:131.6px;height:12.8px;background:#f2f2f2"></div>
<div class="a" style="left:464px;top:504.6px;width:13.4px;height:12.4px;background:#1e8ed8"></div>
<svg class="a" style="left:428px;top:500px" width="140" height="22">
<path d="M7,11 L11,7 L15,11 L11,15 Z" fill="none" stroke="#8a8a8a" stroke-width="0.9"/><circle cx="10.5" cy="11" r="1.5" fill="#4a8ad8"/>
<path d="M18.8,10.5 L21,10.5 L19.9,12 Z" fill="#333"/>
<rect x="24.5" y="9" width="8.5" height="6" fill="#8a8a8a"/><path d="M24,9.5 L28.75,7 L33.5,9.5" fill="none" stroke="#8a8a8a" stroke-width="1"/><rect x="26.5" y="11" width="4.5" height="2.5" fill="#ddd"/>
<path d="M41,15.5 Q38.5,13 38.5,10.5 L39.5,10 L40.5,11 L40.5,8 L41.5,7.5 L42.5,8 L42.5,7 L43.5,6.8 L44.3,7.5 L45.2,7.5 L45.8,8.5 L45.8,13 Q45,15.5 43.5,15.5 Z" fill="#f4f8fc"/>
<circle cx="55" cy="10.5" r="2.6" fill="none" stroke="#666" stroke-width="0.9"/><path d="M56.8,12.4 L59,14.6" stroke="#333" stroke-width="1.2"/><path d="M58.5,7 L58.5,9" stroke="#666" stroke-width="0.6"/>
<circle cx="68.2" cy="10.2" r="3" fill="none" stroke="#666" stroke-width="1"/><path d="M66.5,10.2 L70,10.2 M68.2,8.5 L68.2,12" stroke="#888" stroke-width="0.6"/><path d="M70.4,12.4 L72.8,14.8" stroke="#333" stroke-width="1.3"/>
<path d="M76,10.5 L78.4,10.5 L77.2,12 Z" fill="#333"/>
<rect x="86" y="6.5" width="8.8" height="7" rx="0.8" fill="#6e9ed8" stroke="#707070" stroke-width="0.7"/><rect x="88.5" y="13.5" width="4" height="1.3" fill="#666"/>
<path d="M96,10 L98.2,10 L97.1,11.5 Z" fill="#333"/>
<rect x="102" y="6.6" width="8.8" height="8" fill="#9a9a9a"/><path d="M104.9,6.6 L104.9,14.6 M107.8,6.6 L107.8,14.6 M102,9.3 L110.8,9.3 M102,12 L110.8,12" stroke="#d0d0d0" stroke-width="0.5"/>
<path d="M112,10 L114.4,10 L113.2,11.5 Z" fill="#333"/>
<rect x="118" y="7" width="8" height="6.8" fill="#5a86c8"/><path d="M122,7 L122,13.8 M118,10.4 L126,10.4" stroke="#e8eef8" stroke-width="0.6"/>
<path d="M128,10 L130.4,10 L129.2,11.5 Z" fill="#333"/>
</svg>

<!-- timeline -->
<div class="a" style="left:4px;top:519px;width:991px;height:1px;background:#d0d0d0"></div>
<div class="a" style="left:4px;top:520px;width:991px;height:22px;background:#f2f2f2"></div>
<svg class="a" style="left:0;top:520px" width="1000" height="22">
<g fill="#555" transform="translate(0,1)">
<path d="M9.8,7.5 L11,7.5 L11,16 L9.8,16 Z M16.1,7.5 L11.5,11.75 L16.1,16 Z"/>
<path d="M22.4,11.75 L27,7.5 L27,16 Z M27.5,9.5 L29.4,9.5 L29.4,14 L27.5,14 Z"/>
<path d="M35.7,7.5 L42,11.75 L35.7,16 Z"/>
<path d="M48.3,9.5 L50.2,9.5 L50.2,14 L48.3,14 Z M50.7,7.5 L55.3,11.75 L50.7,16 Z"/>
<path d="M61.6,7.5 L66.6,11.75 L61.6,16 Z M67.4,7.5 L68.6,7.5 L68.6,16 L67.4,16 Z"/>
</g>
<g><defs><linearGradient id="tls" x1="0" x2="1" y1="0" y2="1"><stop offset="0" stop-color="#eef4fa"/><stop offset="1" stop-color="#90b4dc"/></linearGradient></defs><rect x="79.8" y="8.2" width="8.4" height="8.4" fill="url(#tls)" stroke="#3e4654" stroke-width="0.9"/><path d="M81.4,11.7 L81.4,15.1 L84.8,15.1 M81.6,14.9 L85.0,11.5" fill="none" stroke="#2a3040" stroke-width="0.9"/><path d="M84.3,12.0 L87.6,8.0 L88.6,9.3 L85.4,13.1 Z" fill="#f0c010"/>
<rect x="83.7" y="19" width="0.6" height="1.8" fill="#c8c8c8"/>
<rect x="92.3" y="8.2" width="8.4" height="8.4" fill="url(#tls)" stroke="#3e4654" stroke-width="0.9"/><path d="M93.9,11.7 L93.9,15.1 L97.3,15.1 M94.1,14.9 L97.5,11.5" fill="none" stroke="#2a3040" stroke-width="0.9"/><path d="M96.8,12.0 L100.1,8.0 L101.1,9.3 L97.9,13.1 Z" fill="#f0c010"/>
<rect x="96.2" y="19" width="0.6" height="1.8" fill="#c8c8c8"/>
<path d="M105.0,9.5 L107.0,7.9 L111.0,7.9 L111.0,15.5 L109.0,17.1 L105.0,17.1 Z" fill="#a8c2e2" stroke="#7088a8" stroke-width="0.6"/><path d="M112.8,8.3 L112.8,16.0" stroke="#777" stroke-width="0.6"/>
<rect x="108.7" y="19" width="0.6" height="1.8" fill="#c8c8c8"/>
<rect x="117.3" y="8.2" width="8.4" height="8.4" fill="url(#tls)" stroke="#3e4654" stroke-width="0.9"/><path d="M118.9,11.7 L118.9,15.1 L122.3,15.1 M119.1,14.9 L122.5,11.5" fill="none" stroke="#2a3040" stroke-width="0.9"/><path d="M121.8,12.0 L125.1,8.0 L126.1,9.3 L122.9,13.1 Z" fill="#f0c010"/>
<rect x="121.2" y="19" width="0.6" height="1.8" fill="#c8c8c8"/>
<path d="M130.0,9.5 L132.0,7.9 L136.0,7.9 L136.0,15.5 L134.0,17.1 L130.0,17.1 Z" fill="#a8c2e2" stroke="#7088a8" stroke-width="0.6"/><path d="M137.8,8.3 L137.8,16.0" stroke="#777" stroke-width="0.6"/>
<rect x="133.7" y="19" width="0.6" height="1.8" fill="#c8c8c8"/>
<rect x="142.3" y="8.2" width="8.4" height="8.4" fill="url(#tls)" stroke="#3e4654" stroke-width="0.9"/><path d="M143.9,11.7 L143.9,15.1 L147.3,15.1 M144.1,14.9 L147.5,11.5" fill="none" stroke="#2a3040" stroke-width="0.9"/><path d="M146.8,12.0 L150.1,8.0 L151.1,9.3 L147.9,13.1 Z" fill="#f0c010"/>
<rect x="146.2" y="19" width="0.6" height="1.8" fill="#c8c8c8"/>
<path d="M155.0,9.5 L157.0,7.9 L161.0,7.9 L161.0,15.5 L159.0,17.1 L155.0,17.1 Z" fill="#a8c2e2" stroke="#7088a8" stroke-width="0.6"/><path d="M162.8,8.3 L162.8,16.0" stroke="#777" stroke-width="0.6"/>
<rect x="158.7" y="19" width="0.6" height="1.8" fill="#c8c8c8"/>
<rect x="167.3" y="8.2" width="8.4" height="8.4" fill="url(#tls)" stroke="#3e4654" stroke-width="0.9"/><path d="M168.9,11.7 L168.9,15.1 L172.3,15.1 M169.1,14.9 L172.5,11.5" fill="none" stroke="#2a3040" stroke-width="0.9"/><path d="M171.8,12.0 L175.1,8.0 L176.1,9.3 L172.9,13.1 Z" fill="#f0c010"/>
<rect x="171.2" y="19" width="0.6" height="1.8" fill="#c8c8c8"/>
<path d="M180.0,9.5 L182.0,7.9 L186.0,7.9 L186.0,15.5 L184.0,17.1 L180.0,17.1 Z" fill="#a8c2e2" stroke="#7088a8" stroke-width="0.6"/><path d="M187.8,8.3 L187.8,16.0" stroke="#777" stroke-width="0.6"/>
<rect x="183.7" y="19" width="0.6" height="1.8" fill="#c8c8c8"/>
<rect x="192.3" y="8.2" width="8.4" height="8.4" fill="url(#tls)" stroke="#3e4654" stroke-width="0.9"/><path d="M193.9,11.7 L193.9,15.1 L197.3,15.1 M194.1,14.9 L197.5,11.5" fill="none" stroke="#2a3040" stroke-width="0.9"/><path d="M196.8,12.0 L200.1,8.0 L201.1,9.3 L197.9,13.1 Z" fill="#f0c010"/>
<rect x="196.2" y="19" width="0.6" height="1.8" fill="#c8c8c8"/>
<path d="M205.0,9.5 L207.0,7.9 L211.0,7.9 L211.0,15.5 L209.0,17.1 L205.0,17.1 Z" fill="#a8c2e2" stroke="#7088a8" stroke-width="0.6"/><path d="M212.8,8.3 L212.8,16.0" stroke="#777" stroke-width="0.6"/>
<rect x="208.7" y="19" width="0.6" height="1.8" fill="#c8c8c8"/>
<path d="M217.0,12.5 L226.0,12.5 M221.5,8.0 L221.5,17.0" stroke="#666" stroke-width="1"/><path d="M216.7,12.5 L218.5,10.9 L218.5,14.1 Z M226.3,12.5 L224.5,10.9 L224.5,14.1 Z M221.5,7.7 L219.9,9.5 L223.1,9.5 Z M221.5,17.3 L219.9,15.5 L223.1,15.5 Z" fill="#666"/>
<rect x="221.2" y="19" width="0.6" height="1.8" fill="#c8c8c8"/>
<path d="M229.5,12.5 L238.5,12.5 M234.0,8.0 L234.0,17.0" stroke="#666" stroke-width="1"/><path d="M229.2,12.5 L231.0,10.9 L231.0,14.1 Z M238.8,12.5 L237.0,10.9 L237.0,14.1 Z M234.0,7.7 L232.4,9.5 L235.6,9.5 Z M234.0,17.3 L232.4,15.5 L235.6,15.5 Z" fill="#666"/>
<rect x="233.7" y="19" width="0.6" height="1.8" fill="#c8c8c8"/>
<path d="M242.0,12.5 L251.0,12.5 M246.5,8.0 L246.5,17.0" stroke="#666" stroke-width="1"/><path d="M241.7,12.5 L243.5,10.9 L243.5,14.1 Z M251.3,12.5 L249.5,10.9 L249.5,14.1 Z M246.5,7.7 L244.9,9.5 L248.1,9.5 Z M246.5,17.3 L244.9,15.5 L248.1,15.5 Z" fill="#666"/>
<rect x="246.2" y="19" width="0.6" height="1.8" fill="#c8c8c8"/>
<path d="M254.5,12.5 L263.5,12.5 M259.0,8.0 L259.0,17.0" stroke="#666" stroke-width="1"/><path d="M254.2,12.5 L256.0,10.9 L256.0,14.1 Z M263.8,12.5 L262.0,10.9 L262.0,14.1 Z M259.0,7.7 L257.4,9.5 L260.6,9.5 Z M259.0,17.3 L257.4,15.5 L260.6,15.5 Z" fill="#666"/>
<rect x="258.7" y="19" width="0.6" height="1.8" fill="#c8c8c8"/>
<rect x="267.3" y="8.2" width="8.4" height="8.4" fill="url(#tls)" stroke="#3e4654" stroke-width="0.9"/><path d="M268.9,11.7 L268.9,15.1 L272.3,15.1 M269.1,14.9 L272.5,11.5" fill="none" stroke="#2a3040" stroke-width="0.9"/><path d="M271.8,12.0 L275.1,8.0 L276.1,9.3 L272.9,13.1 Z" fill="#f0c010"/>
<rect x="271.2" y="19" width="0.6" height="1.8" fill="#c8c8c8"/>
<path d="M279.7,11.5 Q279.7,8.0 284.0,8.0 L288.3,9.0 L288.3,15.5 Q288.3,17.0 284.0,17.0 L279.7,16.0 Z" fill="#b4bccc" stroke="#6a7488" stroke-width="0.6"/><circle cx="283.5" cy="12.5" r="2" fill="#6a8ac0"/>
<rect x="283.7" y="19" width="0.6" height="1.8" fill="#c8c8c8"/>
<rect x="292.3" y="8.2" width="8.4" height="8.4" fill="url(#tls)" stroke="#3e4654" stroke-width="0.9"/><path d="M293.9,11.7 L293.9,15.1 L297.3,15.1 M294.1,14.9 L297.5,11.5" fill="none" stroke="#2a3040" stroke-width="0.9"/><path d="M296.8,12.0 L300.1,8.0 L301.1,9.3 L297.9,13.1 Z" fill="#f0c010"/>
<rect x="296.2" y="19" width="0.6" height="1.8" fill="#c8c8c8"/>
<path d="M305.0,9.5 L307.0,7.9 L311.0,7.9 L311.0,15.5 L309.0,17.1 L305.0,17.1 Z" fill="#a8c2e2" stroke="#7088a8" stroke-width="0.6"/><path d="M312.8,8.3 L312.8,16.0" stroke="#777" stroke-width="0.6"/>
<rect x="308.7" y="19" width="0.6" height="1.8" fill="#c8c8c8"/>
<path d="M317.5,9.5 L319.5,7.9 L323.5,7.9 L323.5,15.5 L321.5,17.1 L317.5,17.1 Z" fill="#a8c2e2" stroke="#7088a8" stroke-width="0.6"/><path d="M325.3,8.3 L325.3,16.0" stroke="#777" stroke-width="0.6"/>
<rect x="321.2" y="19" width="0.6" height="1.8" fill="#c8c8c8"/>
<rect x="329.8" y="8.2" width="8.4" height="8.4" fill="url(#tls)" stroke="#3e4654" stroke-width="0.9"/><path d="M331.4,11.7 L331.4,15.1 L334.8,15.1 M331.6,14.9 L335.0,11.5" fill="none" stroke="#2a3040" stroke-width="0.9"/><path d="M334.3,12.0 L337.6,8.0 L338.6,9.3 L335.4,13.1 Z" fill="#f0c010"/>
<rect x="333.7" y="19" width="0.6" height="1.8" fill="#c8c8c8"/>
<path d="M342.2,11.5 Q342.2,8.0 346.5,8.0 L350.8,9.0 L350.8,15.5 Q350.8,17.0 346.5,17.0 L342.2,16.0 Z" fill="#b4bccc" stroke="#6a7488" stroke-width="0.6"/><circle cx="346.0" cy="12.5" r="2" fill="#6a8ac0"/>
<rect x="346.2" y="19" width="0.6" height="1.8" fill="#c8c8c8"/>
<rect x="354.8" y="8.2" width="8.4" height="8.4" fill="url(#tls)" stroke="#3e4654" stroke-width="0.9"/><path d="M356.4,11.7 L356.4,15.1 L359.8,15.1 M356.6,14.9 L360.0,11.5" fill="none" stroke="#2a3040" stroke-width="0.9"/><path d="M359.3,12.0 L362.6,8.0 L363.6,9.3 L360.4,13.1 Z" fill="#f0c010"/>
<rect x="358.7" y="19" width="0.6" height="1.8" fill="#c8c8c8"/>
<path d="M367.5,9.5 L369.5,7.9 L373.5,7.9 L373.5,15.5 L371.5,17.1 L367.5,17.1 Z" fill="#a8c2e2" stroke="#7088a8" stroke-width="0.6"/><path d="M375.3,8.3 L375.3,16.0" stroke="#777" stroke-width="0.6"/>
<rect x="371.2" y="19" width="0.6" height="1.8" fill="#c8c8c8"/>
<rect x="379.8" y="8.2" width="8.4" height="8.4" fill="url(#tls)" stroke="#3e4654" stroke-width="0.9"/><path d="M381.4,11.7 L381.4,15.1 L384.8,15.1 M381.6,14.9 L385.0,11.5" fill="none" stroke="#2a3040" stroke-width="0.9"/><path d="M384.3,12.0 L387.6,8.0 L388.6,9.3 L385.4,13.1 Z" fill="#f0c010"/>
<rect x="383.7" y="19" width="0.6" height="1.8" fill="#c8c8c8"/>
<path d="M392.5,9.5 L394.5,7.9 L398.5,7.9 L398.5,15.5 L396.5,17.1 L392.5,17.1 Z" fill="#a8c2e2" stroke="#7088a8" stroke-width="0.6"/><path d="M400.3,8.3 L400.3,16.0" stroke="#777" stroke-width="0.6"/>
<rect x="396.2" y="19" width="0.6" height="1.8" fill="#c8c8c8"/>
<rect x="404.8" y="8.2" width="8.4" height="8.4" fill="url(#tls)" stroke="#3e4654" stroke-width="0.9"/><path d="M406.4,11.7 L406.4,15.1 L409.8,15.1 M406.6,14.9 L410.0,11.5" fill="none" stroke="#2a3040" stroke-width="0.9"/><path d="M409.3,12.0 L412.6,8.0 L413.6,9.3 L410.4,13.1 Z" fill="#f0c010"/>
<rect x="408.7" y="19" width="0.6" height="1.8" fill="#c8c8c8"/>
<path d="M417.5,9.5 L419.5,7.9 L423.5,7.9 L423.5,15.5 L421.5,17.1 L417.5,17.1 Z" fill="#a8c2e2" stroke="#7088a8" stroke-width="0.6"/><path d="M425.3,8.3 L425.3,16.0" stroke="#777" stroke-width="0.6"/>
<rect x="421.2" y="19" width="0.6" height="1.8" fill="#c8c8c8"/>
<rect x="429.8" y="8.2" width="8.4" height="8.4" fill="url(#tls)" stroke="#3e4654" stroke-width="0.9"/><path d="M431.4,11.7 L431.4,15.1 L434.8,15.1 M431.6,14.9 L435.0,11.5" fill="none" stroke="#2a3040" stroke-width="0.9"/><path d="M434.3,12.0 L437.6,8.0 L438.6,9.3 L435.4,13.1 Z" fill="#f0c010"/>
<rect x="433.7" y="19" width="0.6" height="1.8" fill="#c8c8c8"/>
<path d="M442.2,11.5 Q442.2,8.0 446.5,8.0 L450.8,9.0 L450.8,15.5 Q450.8,17.0 446.5,17.0 L442.2,16.0 Z" fill="#b4bccc" stroke="#6a7488" stroke-width="0.6"/><circle cx="446.0" cy="12.5" r="2" fill="#6a8ac0"/>
<rect x="446.2" y="19" width="0.6" height="1.8" fill="#c8c8c8"/>
<path d="M454.7,11.5 Q454.7,8.0 459.0,8.0 L463.3,9.0 L463.3,15.5 Q463.3,17.0 459.0,17.0 L454.7,16.0 Z" fill="#b4bccc" stroke="#6a7488" stroke-width="0.6"/><circle cx="458.5" cy="12.5" r="2" fill="#6a8ac0"/>
<rect x="458.7" y="19" width="0.6" height="1.8" fill="#c8c8c8"/>
<rect x="467.3" y="8.2" width="8.4" height="8.4" fill="url(#tls)" stroke="#3e4654" stroke-width="0.9"/><path d="M468.9,11.7 L468.9,15.1 L472.3,15.1 M469.1,14.9 L472.5,11.5" fill="none" stroke="#2a3040" stroke-width="0.9"/><path d="M471.8,12.0 L475.1,8.0 L476.1,9.3 L472.9,13.1 Z" fill="#f0c010"/>
<rect x="471.2" y="19" width="0.6" height="1.8" fill="#c8c8c8"/>
<path d="M480.0,9.5 L482.0,7.9 L486.0,7.9 L486.0,15.5 L484.0,17.1 L480.0,17.1 Z" fill="#a8c2e2" stroke="#7088a8" stroke-width="0.6"/><path d="M487.8,8.3 L487.8,16.0" stroke="#777" stroke-width="0.6"/>
<rect x="483.7" y="19" width="0.6" height="1.8" fill="#c8c8c8"/>
<rect x="492.3" y="8.2" width="8.4" height="8.4" fill="url(#tls)" stroke="#3e4654" stroke-width="0.9"/><path d="M493.9,11.7 L493.9,15.1 L497.3,15.1 M494.1,14.9 L497.5,11.5" fill="none" stroke="#2a3040" stroke-width="0.9"/><path d="M496.8,12.0 L500.1,8.0 L501.1,9.3 L497.9,13.1 Z" fill="#f0c010"/>
<rect x="496.2" y="19" width="0.6" height="1.8" fill="#c8c8c8"/>
<path d="M505.0,9.5 L507.0,7.9 L511.0,7.9 L511.0,15.5 L509.0,17.1 L505.0,17.1 Z" fill="#a8c2e2" stroke="#7088a8" stroke-width="0.6"/><path d="M512.8,8.3 L512.8,16.0" stroke="#777" stroke-width="0.6"/>
<rect x="508.7" y="19" width="0.6" height="1.8" fill="#c8c8c8"/>
<rect x="517.3" y="8.2" width="8.4" height="8.4" fill="url(#tls)" stroke="#3e4654" stroke-width="0.9"/><path d="M518.9,11.7 L518.9,15.1 L522.3,15.1 M519.1,14.9 L522.5,11.5" fill="none" stroke="#2a3040" stroke-width="0.9"/><path d="M521.8,12.0 L525.1,8.0 L526.1,9.3 L522.9,13.1 Z" fill="#f0c010"/>
<rect x="521.2" y="19" width="0.6" height="1.8" fill="#c8c8c8"/>
<path d="M530.0,9.5 L532.0,7.9 L536.0,7.9 L536.0,15.5 L534.0,17.1 L530.0,17.1 Z" fill="#a8c2e2" stroke="#7088a8" stroke-width="0.6"/><path d="M537.8,8.3 L537.8,16.0" stroke="#777" stroke-width="0.6"/>
<rect x="533.7" y="19" width="0.6" height="1.8" fill="#c8c8c8"/>
<rect x="542.3" y="8.2" width="8.4" height="8.4" fill="url(#tls)" stroke="#3e4654" stroke-width="0.9"/><path d="M543.9,11.7 L543.9,15.1 L547.3,15.1 M544.1,14.9 L547.5,11.5" fill="none" stroke="#2a3040" stroke-width="0.9"/><path d="M546.8,12.0 L550.1,8.0 L551.1,9.3 L547.9,13.1 Z" fill="#f0c010"/>
<rect x="546.2" y="19" width="0.6" height="1.8" fill="#c8c8c8"/>
<path d="M555.0,9.5 L557.0,7.9 L561.0,7.9 L561.0,15.5 L559.0,17.1 L555.0,17.1 Z" fill="#a8c2e2" stroke="#7088a8" stroke-width="0.6"/><path d="M562.8,8.3 L562.8,16.0" stroke="#777" stroke-width="0.6"/>
<rect x="558.7" y="19" width="0.6" height="1.8" fill="#c8c8c8"/>
<rect x="567.3" y="8.2" width="8.4" height="8.4" fill="url(#tls)" stroke="#3e4654" stroke-width="0.9"/><path d="M568.9,11.7 L568.9,15.1 L572.3,15.1 M569.1,14.9 L572.5,11.5" fill="none" stroke="#2a3040" stroke-width="0.9"/><path d="M571.8,12.0 L575.1,8.0 L576.1,9.3 L572.9,13.1 Z" fill="#f0c010"/>
<rect x="571.2" y="19" width="0.6" height="1.8" fill="#c8c8c8"/>
<path d="M579.7,11.5 Q579.7,8.0 584.0,8.0 L588.3,9.0 L588.3,15.5 Q588.3,17.0 584.0,17.0 L579.7,16.0 Z" fill="#b4bccc" stroke="#6a7488" stroke-width="0.6"/><circle cx="583.5" cy="12.5" r="2" fill="#6a8ac0"/>
<rect x="583.7" y="19" width="0.6" height="1.8" fill="#c8c8c8"/>
<rect x="592.3" y="8.2" width="8.4" height="8.4" fill="url(#tls)" stroke="#3e4654" stroke-width="0.9"/><path d="M593.9,11.7 L593.9,15.1 L597.3,15.1 M594.1,14.9 L597.5,11.5" fill="none" stroke="#2a3040" stroke-width="0.9"/><path d="M596.8,12.0 L600.1,8.0 L601.1,9.3 L597.9,13.1 Z" fill="#f0c010"/>
<rect x="596.2" y="19" width="0.6" height="1.8" fill="#c8c8c8"/>
<rect x="604.7" y="8.0" width="8.6" height="9" rx="2" fill="#a8c8ec" stroke="#6a88b0" stroke-width="0.6"/>
<rect x="608.7" y="19" width="0.6" height="1.8" fill="#c8c8c8"/>
<rect x="617.3" y="8.2" width="8.4" height="8.4" fill="url(#tls)" stroke="#3e4654" stroke-width="0.9"/><path d="M618.9,11.7 L618.9,15.1 L622.3,15.1 M619.1,14.9 L622.5,11.5" fill="none" stroke="#2a3040" stroke-width="0.9"/><path d="M621.8,12.0 L625.1,8.0 L626.1,9.3 L622.9,13.1 Z" fill="#f0c010"/>
<rect x="621.2" y="19" width="0.6" height="1.8" fill="#c8c8c8"/>
<rect x="629.7" y="8.0" width="8.6" height="9" rx="2" fill="#a8c8ec" stroke="#6a88b0" stroke-width="0.6"/>
<rect x="633.7" y="19" width="0.6" height="1.8" fill="#c8c8c8"/>
<rect x="642.3" y="8.2" width="8.4" height="8.4" fill="url(#tls)" stroke="#3e4654" stroke-width="0.9"/><path d="M643.9,11.7 L643.9,15.1 L647.3,15.1 M644.1,14.9 L647.5,11.5" fill="none" stroke="#2a3040" stroke-width="0.9"/><path d="M646.8,12.0 L650.1,8.0 L651.1,9.3 L647.9,13.1 Z" fill="#f0c010"/>
<rect x="646.2" y="19" width="0.6" height="1.8" fill="#c8c8c8"/>
<path d="M655.0,9.5 L657.0,7.9 L661.0,7.9 L661.0,15.5 L659.0,17.1 L655.0,17.1 Z" fill="#a8c2e2" stroke="#7088a8" stroke-width="0.6"/><path d="M662.8,8.3 L662.8,16.0" stroke="#777" stroke-width="0.6"/>
<rect x="658.7" y="19" width="0.6" height="1.8" fill="#c8c8c8"/>
<rect x="667.3" y="8.2" width="8.4" height="8.4" fill="url(#tls)" stroke="#3e4654" stroke-width="0.9"/><path d="M668.9,11.7 L668.9,15.1 L672.3,15.1 M669.1,14.9 L672.5,11.5" fill="none" stroke="#2a3040" stroke-width="0.9"/><path d="M671.8,12.0 L675.1,8.0 L676.1,9.3 L672.9,13.1 Z" fill="#f0c010"/>
<rect x="671.2" y="19" width="0.6" height="1.8" fill="#c8c8c8"/>
<path d="M680.0,9.5 L682.0,7.9 L686.0,7.9 L686.0,15.5 L684.0,17.1 L680.0,17.1 Z" fill="#a8c2e2" stroke="#7088a8" stroke-width="0.6"/><path d="M687.8,8.3 L687.8,16.0" stroke="#777" stroke-width="0.6"/>
<rect x="683.7" y="19" width="0.6" height="1.8" fill="#c8c8c8"/>
<rect x="692.3" y="8.2" width="8.4" height="8.4" fill="url(#tls)" stroke="#3e4654" stroke-width="0.9"/><path d="M693.9,11.7 L693.9,15.1 L697.3,15.1 M694.1,14.9 L697.5,11.5" fill="none" stroke="#2a3040" stroke-width="0.9"/><path d="M696.8,12.0 L700.1,8.0 L701.1,9.3 L697.9,13.1 Z" fill="#f0c010"/>
<rect x="696.2" y="19" width="0.6" height="1.8" fill="#c8c8c8"/>
<path d="M705.0,9.5 L707.0,7.9 L711.0,7.9 L711.0,15.5 L709.0,17.1 L705.0,17.1 Z" fill="#a8c2e2" stroke="#7088a8" stroke-width="0.6"/><path d="M712.8,8.3 L712.8,16.0" stroke="#777" stroke-width="0.6"/>
<rect x="708.7" y="19" width="0.6" height="1.8" fill="#c8c8c8"/>
<path d="M717.0,12.5 L726.0,12.5 M721.5,8.0 L721.5,17.0" stroke="#666" stroke-width="1"/><path d="M716.7,12.5 L718.5,10.9 L718.5,14.1 Z M726.3,12.5 L724.5,10.9 L724.5,14.1 Z M721.5,7.7 L719.9,9.5 L723.1,9.5 Z M721.5,17.3 L719.9,15.5 L723.1,15.5 Z" fill="#666"/>
<rect x="721.2" y="19" width="0.6" height="1.8" fill="#c8c8c8"/>
<path d="M729.5,12.5 L738.5,12.5 M734.0,8.0 L734.0,17.0" stroke="#666" stroke-width="1"/><path d="M729.2,12.5 L731.0,10.9 L731.0,14.1 Z M738.8,12.5 L737.0,10.9 L737.0,14.1 Z M734.0,7.7 L732.4,9.5 L735.6,9.5 Z M734.0,17.3 L732.4,15.5 L735.6,15.5 Z" fill="#666"/>
<rect x="733.7" y="19" width="0.6" height="1.8" fill="#c8c8c8"/>
<circle cx="746.5" cy="12.5" r="4.3" fill="#b8b8b8" stroke="#7a7a7a" stroke-width="0.6"/><path d="M745.5,8.5 Q749.5,12.5 745.5,16.5" fill="none" stroke="#eee" stroke-width="0.8"/>
<rect x="746.2" y="19" width="0.6" height="1.8" fill="#c8c8c8"/>
<rect x="754.8" y="8.2" width="8.4" height="8.4" fill="url(#tls)" stroke="#3e4654" stroke-width="0.9"/><path d="M756.4,11.7 L756.4,15.1 L759.8,15.1 M756.6,14.9 L760.0,11.5" fill="none" stroke="#2a3040" stroke-width="0.9"/><path d="M759.3,12.0 L762.6,8.0 L763.6,9.3 L760.4,13.1 Z" fill="#f0c010"/>
<rect x="758.7" y="19" width="0.6" height="1.8" fill="#c8c8c8"/>
<path d="M767.2,11.5 Q767.2,8.0 771.5,8.0 L775.8,9.0 L775.8,15.5 Q775.8,17.0 771.5,17.0 L767.2,16.0 Z" fill="#b4bccc" stroke="#6a7488" stroke-width="0.6"/><circle cx="771.0" cy="12.5" r="2" fill="#6a8ac0"/>
<rect x="771.2" y="19" width="0.6" height="1.8" fill="#c8c8c8"/>
<path d="M779.7,11.5 Q779.7,8.0 784.0,8.0 L788.3,9.0 L788.3,15.5 Q788.3,17.0 784.0,17.0 L779.7,16.0 Z" fill="#b4bccc" stroke="#6a7488" stroke-width="0.6"/><circle cx="783.5" cy="12.5" r="2" fill="#6a8ac0"/>
<rect x="783.7" y="19" width="0.6" height="1.8" fill="#c8c8c8"/>
<path d="M792.5,10.0 L795.5,7.9 L800.5,7.9 L800.5,15.0 L797.5,17.1 L792.5,17.1 Z" fill="#70a8e8" stroke="#3a70b8" stroke-width="0.6"/>
<rect x="796.2" y="19" width="0.6" height="1.8" fill="#c8c8c8"/>
<rect x="804.8" y="8.2" width="8.4" height="8.4" fill="url(#tls)" stroke="#3e4654" stroke-width="0.9"/><path d="M806.4,11.7 L806.4,15.1 L809.8,15.1 M806.6,14.9 L810.0,11.5" fill="none" stroke="#2a3040" stroke-width="0.9"/><path d="M809.3,12.0 L812.6,8.0 L813.6,9.3 L810.4,13.1 Z" fill="#f0c010"/>
<rect x="808.7" y="19" width="0.6" height="1.8" fill="#c8c8c8"/>
<rect x="817.2" y="8.0" width="8.6" height="9" rx="1.5" fill="#f4f4f4" stroke="#8a8a8a" stroke-width="0.6"/>
<rect x="821.2" y="19" width="0.6" height="1.8" fill="#c8c8c8"/>
<path d="M830.0,9.5 L832.0,7.9 L836.0,7.9 L836.0,15.5 L834.0,17.1 L830.0,17.1 Z" fill="#a8c2e2" stroke="#7088a8" stroke-width="0.6"/><path d="M837.8,8.3 L837.8,16.0" stroke="#777" stroke-width="0.6"/>
<rect x="833.7" y="19" width="0.6" height="1.8" fill="#c8c8c8"/>
<path d="M842.0,12.5 L851.0,12.5 M846.5,8.0 L846.5,17.0" stroke="#666" stroke-width="1"/><path d="M841.7,12.5 L843.5,10.9 L843.5,14.1 Z M851.3,12.5 L849.5,10.9 L849.5,14.1 Z M846.5,7.7 L844.9,9.5 L848.1,9.5 Z M846.5,17.3 L844.9,15.5 L848.1,15.5 Z" fill="#666"/>
<rect x="846.2" y="19" width="0.6" height="1.8" fill="#c8c8c8"/>
<rect x="854.8" y="8.2" width="8.4" height="8.4" fill="url(#tls)" stroke="#3e4654" stroke-width="0.9"/><path d="M856.4,11.7 L856.4,15.1 L859.8,15.1 M856.6,14.9 L860.0,11.5" fill="none" stroke="#2a3040" stroke-width="0.9"/><path d="M859.3,12.0 L862.6,8.0 L863.6,9.3 L860.4,13.1 Z" fill="#f0c010"/>
<rect x="858.7" y="19" width="0.6" height="1.8" fill="#c8c8c8"/>
<path d="M867.2,11.5 Q867.2,8.0 871.5,8.0 L875.8,9.0 L875.8,15.5 Q875.8,17.0 871.5,17.0 L867.2,16.0 Z" fill="#b4bccc" stroke="#6a7488" stroke-width="0.6"/><circle cx="871.0" cy="12.5" r="2" fill="#6a8ac0"/>
<rect x="871.2" y="19" width="0.6" height="1.8" fill="#c8c8c8"/>
<rect x="879.8" y="8.2" width="8.4" height="8.4" fill="url(#tls)" stroke="#3e4654" stroke-width="0.9"/><path d="M881.4,11.7 L881.4,15.1 L884.8,15.1 M881.6,14.9 L885.0,11.5" fill="none" stroke="#2a3040" stroke-width="0.9"/><path d="M884.3,12.0 L887.6,8.0 L888.6,9.3 L885.4,13.1 Z" fill="#f0c010"/>
<rect x="883.7" y="19" width="0.6" height="1.8" fill="#c8c8c8"/>
<rect x="892.2" y="8.0" width="8.6" height="9" rx="2" fill="#a8c8ec" stroke="#6a88b0" stroke-width="0.6"/>
<rect x="896.2" y="19" width="0.6" height="1.8" fill="#c8c8c8"/>
<rect x="904.8" y="8.2" width="8.4" height="8.4" fill="url(#tls)" stroke="#3e4654" stroke-width="0.9"/><path d="M906.4,11.7 L906.4,15.1 L909.8,15.1 M906.6,14.9 L910.0,11.5" fill="none" stroke="#2a3040" stroke-width="0.9"/><path d="M909.3,12.0 L912.6,8.0 L913.6,9.3 L910.4,13.1 Z" fill="#f0c010"/>
<rect x="908.7" y="19" width="0.6" height="1.8" fill="#c8c8c8"/>
<rect x="917.2" y="8.0" width="8.6" height="9" rx="2" fill="#a8c8ec" stroke="#6a88b0" stroke-width="0.6"/>
<rect x="921.2" y="19" width="0.6" height="1.8" fill="#c8c8c8"/></g>
<path d="M928,2 L928,21" stroke="#777" stroke-width="1.2"/><path d="M924,1 L932,1 L928,5 Z" fill="#777"/>
<circle cx="983.8" cy="12.8" r="3.3" fill="none" stroke="#6a6a6a" stroke-width="1.6" stroke-dasharray="1.3 1"/><circle cx="983.8" cy="12.8" r="2.6" fill="#6a6a6a"/><circle cx="983.8" cy="12.8" r="1" fill="#f2f2f2"/>
</svg>

<!-- taskbar -->
<div class="a" style="left:0;top:542px;width:1000px;height:21px;background:#0c121a"></div>
<svg class="a" style="left:0;top:542px" width="1000" height="21">
<g fill="#f2f2f2"><path d="M8.3,6.6 L11.9,6.1 L11.9,9.9 L8.3,9.9 Z M12.6,6 L16.6,5.4 L16.6,9.9 L12.6,9.9 Z M8.3,10.6 L11.9,10.6 L11.9,14.4 L8.3,13.9 Z M12.6,10.6 L16.6,10.6 L16.6,15.1 L12.6,14.5 Z"/></g>
<circle cx="38.8" cy="9.2" r="2.6" fill="none" stroke="#e8e8e8" stroke-width="0.9"/><path d="M36.9,11.1 L33.6,14.4" stroke="#e8e8e8" stroke-width="0.9"/>
<circle cx="64" cy="10.5" r="5" fill="#555a60" stroke="#c8c8c8" stroke-width="0.8"/><rect x="60.5" y="9" width="7" height="3" fill="#20242a"/>
<path d="M89,4.6 L90.6,8.8 L95,8.9 L91.5,11.6 L92.8,15.8 L89,13.3 L85.2,15.8 L86.5,11.6 L83,8.9 L87.4,8.8 Z" fill="#b00c12"/>
<path d="M109,6.5 L114,6.5 L115,7.5 L121,7.5 L121,15.5 L109,15.5 Z" fill="#f0c040"/><rect x="111.5" y="10.5" width="7" height="4.5" fill="#3a9ae0"/>
<ellipse cx="140" cy="11" rx="5.3" ry="4.6" fill="#c8d6e8"/><circle cx="137.8" cy="10" r="1" fill="#e04040"/><circle cx="140.5" cy="8.5" r="1" fill="#40a040"/><path d="M141.5,14 L146,5.5" stroke="#e8a040" stroke-width="1.3"/>
<rect x="160" y="5" width="12" height="11" fill="#101820" stroke="#3a7ab0" stroke-width="0.8"/><rect x="162.5" y="8.2" width="7" height="4.6" fill="#c8c8c8"/><rect x="163.8" y="9.2" width="4.4" height="2.6" fill="#333"/>
<circle cx="191.6" cy="10.5" r="5.5" fill="#db3a2e"/><path d="M191.6,10.5 L196.4,7.75 A5.5,5.5 0 0 1 194.3,15.3 Z" fill="#f2c418"/><path d="M191.6,10.5 L194.3,15.3 A5.5,5.5 0 0 1 186.8,7.75 Z" fill="#2ea14a"/><circle cx="191.6" cy="10.5" r="2.5" fill="#fff"/><circle cx="191.6" cy="10.5" r="1.9" fill="#3a7ae6"/>
<circle cx="217" cy="10.5" r="5.5" fill="#1a8a96"/><path d="M213.5,10.5 A1.6,1.6 0 1 1 216.7,10.5 A1.6,1.6 0 1 1 213.5,10.5 M217.3,10.5 A1.6,1.6 0 1 0 220.5,10.5 A1.6,1.6 0 1 0 217.3,10.5" fill="none" stroke="#e8f4f4" stroke-width="0.8"/>
<rect x="236.5" y="5.5" width="11.5" height="10" fill="#232a24"/><path d="M238.5,10.5 Q242,6.5 246,10.5 Q242,14.5 238.5,10.5 Z" fill="#76b900"/>
<circle cx="268.2" cy="10.5" r="5.5" fill="#f0f0f0"/><circle cx="268.2" cy="10.5" r="4.4" fill="#1a1a1a"/><circle cx="268.2" cy="10.5" r="2.8" fill="#e02020"/>
<path d="M288,15.5 Q287,8 293.5,5 Q300,8 299,15.5 L296,14 L293.5,16 L291,14 Z" fill="#e880b8"/>
<circle cx="318.8" cy="10.5" r="5" fill="none" stroke="#f0f0f0" stroke-width="1.5"/><circle cx="318.8" cy="10.5" r="2" fill="none" stroke="#f0f0f0" stroke-width="1.2"/><path d="M318.8,5 L323.5,5" stroke="#0c121a" stroke-width="1.5"/>
<rect x="338.5" y="4" width="13.5" height="13" fill="#f6e2c8"/><path d="M342.5,6.5 L348,6.5 L348,8.3 L344.5,8.3 L344.5,10 L347.5,10 L347.5,11.7 L344.5,11.7 L344.5,14.8 L342.5,14.8 Z" fill="#e08a30"/>
<rect x="334.6" y="20" width="20.5" height="1" fill="#f0e0a0"/>
<rect x="364" y="4.5" width="13" height="12.5" fill="#f4f0ec"/><path d="M365.5,15.5 L369.3,5.5 L371.7,5.5 L375.5,15.5 L373.3,15.5 L372.5,13 L368.5,13 L367.7,15.5 Z M369,11.3 L372,11.3 L370.5,7.3 Z" fill="#c42020"/>
<circle cx="395.8" cy="10.5" r="5.7" fill="#f2f2f2"/><path d="M393,7 L395.8,10.5 L398.6,7 M395.8,10.5 L395.8,14.2" stroke="#e02020" stroke-width="1.6" fill="none"/>
<path d="M884.5,12 L887.5,9 L890.5,12" fill="none" stroke="#e0e0e0" stroke-width="0.9"/>
<g fill="#8a8a8a"><rect x="896.5" y="12" width="1" height="2"/><rect x="898.2" y="11" width="1" height="3"/><rect x="899.9" y="10" width="1" height="4"/><rect x="901.6" y="9" width="1" height="5"/><rect x="903.3" y="8" width="1" height="6"/></g>
<path d="M909.5,9 L911,9 L913,7 L913,15 L911,13 L909.5,13 Z" fill="none" stroke="#e0e0e0" stroke-width="0.8"/><path d="M914.5,9 Q915.5,11 914.5,13" fill="none" stroke="#e0e0e0" stroke-width="0.6"/>
<path d="M978.6,6.5 L987.5,6.5 L987.5,14 L983,14 L980.5,16.5 L980.5,14 L978.6,14 Z" fill="none" stroke="#e8e8e8" stroke-width="0.9"/>
</svg>
<div class="t" style="left:923px;top:549.2px;font-size:5.6px;color:#f0f0f0">РУС</div>
<div class="t" style="left:947.3px;top:544.6px;font-size:6px;color:#f0f0f0">18:30</div>
<div class="t" style="left:940.8px;top:554.6px;font-size:5.6px;color:#f0f0f0">14.08.2019</div>
<div class="a" style="left:0;top:0;width:3.8px;height:542px;background:linear-gradient(#021c3c,#011733 50%,#011530)"></div>
<div class="a" style="left:995.2px;top:0;width:4.8px;height:542px;background:linear-gradient(#011a36,#022a5a 40%,#022a5a 60%,#021f44)"></div>
</body></html>
